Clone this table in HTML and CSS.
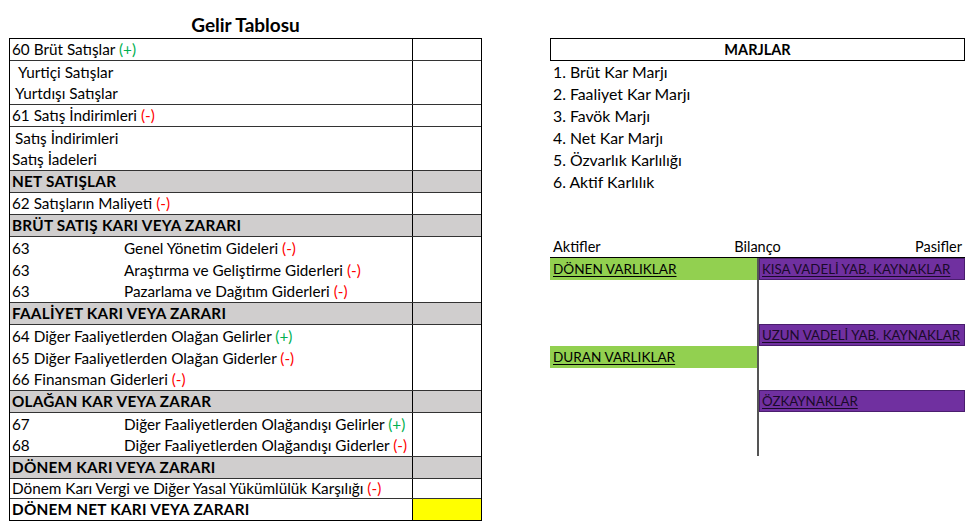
FILE: index.html
```html
<!DOCTYPE html>
<html lang="tr">
<head>
<meta charset="utf-8">
<title>Gelir Tablosu</title>
<link rel="stylesheet" href="styles.css">
</head>
<body>
<div class="page">
  <section class="income">
    <h1 class="title">Gelir Tablosu</h1>
    <div class="sheet">
      <div class="block"><div class="lbl"><div class="ln">60 Brüt Satışlar <span class="plus">(+)</span></div></div><div class="val"></div></div>
      <div class="block"><div class="lbl"><div class="ln in2">Yurtiçi Satışlar</div><div class="ln in1">Yurtdışı Satışlar</div></div><div class="val"></div></div>
      <div class="block"><div class="lbl"><div class="ln">61 Satış İndirimleri <span class="minus">(-)</span></div></div><div class="val"></div></div>
      <div class="block"><div class="lbl"><div class="ln in1">Satış İndirimleri</div><div class="ln">Satış İadeleri</div></div><div class="val"></div></div>
      <div class="block total"><div class="lbl"><div class="ln">NET SATIŞLAR</div></div><div class="val"></div></div>
      <div class="block"><div class="lbl"><div class="ln">62 Satışların Maliyeti <span class="minus">(-)</span></div></div><div class="val"></div></div>
      <div class="block total"><div class="lbl"><div class="ln">BRÜT SATIŞ KARI VEYA ZARARI</div></div><div class="val"></div></div>
      <div class="block"><div class="lbl">
        <div class="ln"><span class="code">63</span>Genel Yönetim Gideleri <span class="minus">(-)</span></div>
        <div class="ln"><span class="code">63</span>Araştırma ve Geliştirme Giderleri <span class="minus">(-)</span></div>
        <div class="ln"><span class="code">63</span>Pazarlama ve Dağıtım Giderleri <span class="minus">(-)</span></div>
      </div><div class="val"></div></div>
      <div class="block total"><div class="lbl"><div class="ln">FAALİYET KARI VEYA ZARARI</div></div><div class="val"></div></div>
      <div class="block"><div class="lbl">
        <div class="ln">64 Diğer Faaliyetlerden Olağan Gelirler <span class="plus">(+)</span></div>
        <div class="ln">65 Diğer Faaliyetlerden Olağan Giderler <span class="minus">(-)</span></div>
        <div class="ln">66 Finansman Giderleri <span class="minus">(-)</span></div>
      </div><div class="val"></div></div>
      <div class="block total"><div class="lbl"><div class="ln">OLAĞAN KAR VEYA ZARAR</div></div><div class="val"></div></div>
      <div class="block"><div class="lbl">
        <div class="ln"><span class="code">67</span>Diğer Faaliyetlerden Olağandışı Gelirler <span class="plus">(+)</span></div>
        <div class="ln"><span class="code">68</span>Diğer Faaliyetlerden Olağandışı Giderler <span class="minus">(-)</span></div>
      </div><div class="val"></div></div>
      <div class="block total"><div class="lbl"><div class="ln">DÖNEM KARI VEYA ZARARI</div></div><div class="val"></div></div>
      <div class="block short"><div class="lbl"><div class="ln">Dönem Karı Vergi ve Diğer Yasal Yükümlülük Karşılığı <span class="minus">(-)</span></div></div><div class="val"></div></div>
      <div class="block final strong"><div class="lbl"><div class="ln">DÖNEM NET KARI VEYA ZARARI</div></div><div class="val yellow"></div></div>
    </div>
  </section>

  <section class="side">
    <div class="marj-head">MARJLAR</div>
    <ol class="marj-list">
      <li>1. Brüt Kar Marjı</li>
      <li>2. Faaliyet Kar Marjı</li>
      <li>3. Favök Marjı</li>
      <li>4. Net Kar Marjı</li>
      <li>5. Özvarlık Karlılığı</li>
      <li>6. Aktif Karlılık</li>
    </ol>

    <div class="bal-head">
      <span class="bh-left">Aktifler</span>
      <span class="bh-mid">Bilanço</span>
      <span class="bh-right">Pasifler</span>
    </div>
    <div class="bal">
      <div class="cell green"><u>DÖNEN VARLIKLAR</u></div><div class="cell right purple"><u>KISA VADELİ YAB. KAYNAKLAR</u></div>
      <div class="cell"></div><div class="cell right"></div>
      <div class="cell"></div><div class="cell right"></div>
      <div class="cell"></div><div class="cell right purple"><u>UZUN VADELİ YAB. KAYNAKLAR</u></div>
      <div class="cell green"><u>DURAN VARLIKLAR</u></div><div class="cell right"></div>
      <div class="cell"></div><div class="cell right"></div>
      <div class="cell"></div><div class="cell right purple"><u>ÖZKAYNAKLAR</u></div>
      <div class="cell"></div><div class="cell right"></div>
      <div class="cell"></div><div class="cell right"></div>
    </div>
  </section>
</div>
</body>
</html>
```

FILE: styles.css
```css
* { box-sizing: border-box; }

html, body {
  margin: 0;
  padding: 0;
  background: #fff;
}

body {
  font-family: Lato, "Open Sans", "Liberation Sans", sans-serif;
  font-size: 15.3px;
  color: #000;
}

.page {
  display: flex;
  align-items: flex-start;
}

/* ---------- income statement ---------- */
.income {
  margin-left: 9px;
  width: 473px;
}

.title {
  margin: 0;
  height: 38px;
  padding-top: 14px;
  font-size: 19px;
  line-height: 21px;
  font-weight: bold;
  text-align: center;
}

.sheet {
  border: 1px solid #000;
}

.block {
  display: grid;
  grid-template-columns: 403px 1fr;
  border-bottom: 1px solid #333;
}

.block.final { border-bottom: none; }

.lbl {
  border-right: 1px solid #000;
}

.ln {
  height: 22px;
  line-height: 22px;
  padding-left: 2px;
  white-space: nowrap;
}

.ln:last-child {
  height: 21px;
  line-height: 21px;
}

.block.short .ln:last-child {
  height: 19px;
  line-height: 19px;
}

.ln.in1 { padding-left: 5px; }
.ln.in2 { padding-left: 8px; }

.code {
  display: inline-block;
  width: 112px;
}

.total {
  background: #d0cece;
}

.total,
.strong {
  font-weight: bold;
  letter-spacing: 0.25px;
}

.val.yellow {
  background: #ffff00;
}

.plus { color: #00b050; }
.minus { color: #ff0000; }

/* ---------- right side ---------- */
.side {
  margin-left: 68px;
  margin-top: 38px;
  width: 415px;
}

.marj-head {
  height: 23px;
  border: 1px solid #000;
  text-align: center;
  font-weight: bold;
  font-size: 14.5px;
  line-height: 21px;
}

.marj-list {
  list-style: none;
  margin: 0;
  padding: 0 0 0 3px;
  font-size: 15.8px;
}

.marj-list li {
  height: 22px;
  line-height: 22px;
}

.bal-head {
  margin-top: 43px;
  height: 22px;
  display: grid;
  grid-template-columns: 1fr auto 1fr;
  padding: 0 3px;
  font-size: 14.5px;
  line-height: 22px;
  border-bottom: 1px solid #000;
}

.bh-right { text-align: right; }

.bal {
  display: grid;
  grid-template-columns: 207px 208px;
  grid-auto-rows: 22px;
  font-size: 13.6px;
}

.cell {
  line-height: 22px;
  padding-left: 3px;
  white-space: nowrap;
}

.cell.right {
  border-left: 2px solid #555;
}

.cell.green {
  background: #92d050;
}

.cell.purple {
  background: #7030a0;
  color: #1a0a2a;
  font-size: 13.3px;
  box-shadow: inset 0 0 0 1px #4a1d6e;
}

.cell u {
  text-underline-offset: 2px;
}
```
